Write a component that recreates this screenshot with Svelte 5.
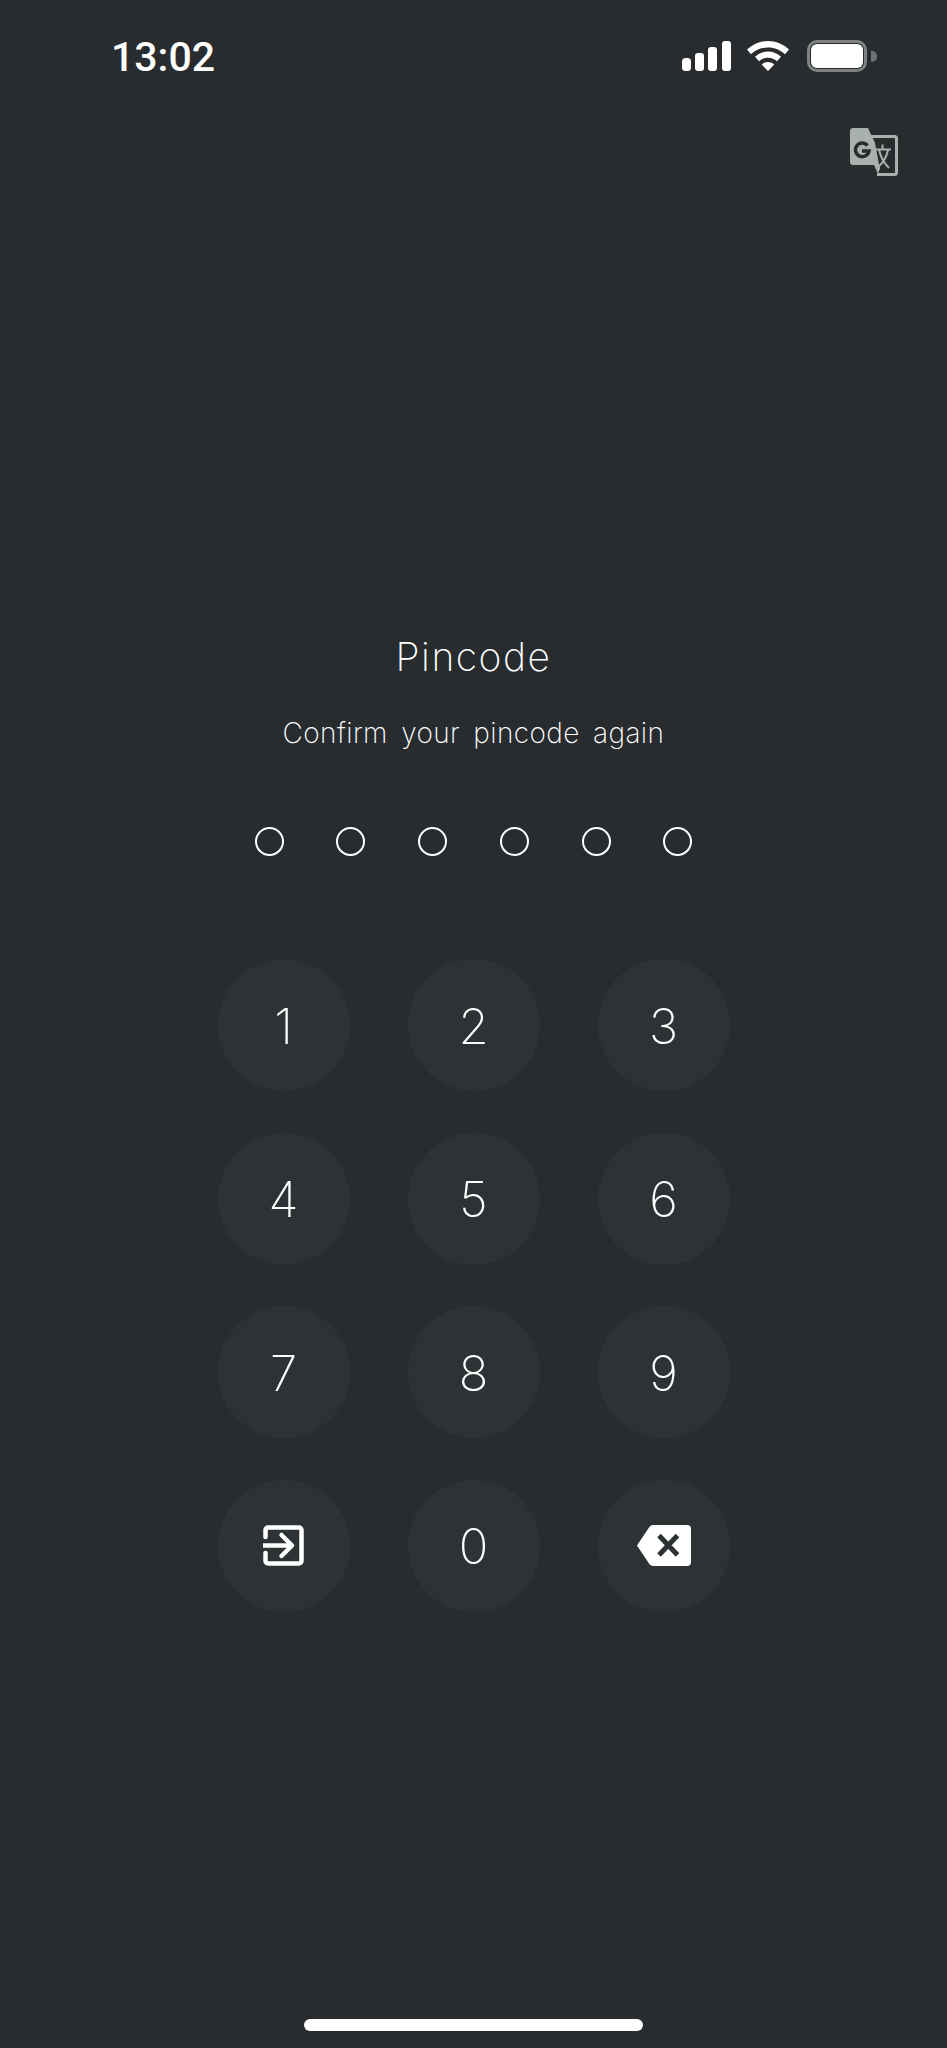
<script>
  const dots = [0, 1, 2, 3, 4, 5];
  const keys = ['1', '2', '3', '4', '5', '6', '7', '8', '9', 'enter', '0', 'del'];
</script>

<main class="screen">
  <header class="status">
    <span class="time">13:02</span>
    <div class="status-icons">
      <svg class="signal" viewBox="0 0 49 30" width="49" height="30" aria-hidden="true">
        <rect x="0" y="17" width="9" height="13" rx="3.5" />
        <rect x="13" y="12" width="9" height="18" rx="3" />
        <rect x="26" y="6" width="9" height="24" rx="3" />
        <rect x="40" y="0" width="9" height="30" rx="3" />
      </svg>
      <svg class="wifi" viewBox="0 0 42 30" width="42" height="30" aria-hidden="true">
        <path d="M21 0C13 0 6 3 0 8.500l4 4.700C8.500 9 14.500 6.500 21 6.500s12.500 2.500 17 6.700l4-4.700C36 3 29 0 21 0z" />
        <path d="M21 10.500c-5 0-9.500 2-13 5.200l4 4.600c2.300-2.200 5.500-3.600 9-3.600s6.700 1.400 9 3.600l4-4.600C30.500 12.500 26 10.500 21 10.500z" />
        <path d="M21 21c-2.500 0-4.800 1-6.300 2.600L21 30l6.300-6.400C25.800 22 23.500 21 21 21z" />
      </svg>
      <div class="battery">
        <div class="battery-body"><div class="battery-fill"></div></div>
        <div class="battery-nub"></div>
      </div>
    </div>
  </header>

  <div class="translate-row">
    <svg class="translate" viewBox="0 0 48 48" width="48" height="48" aria-hidden="true">
      <path class="sheet-back" d="M20 8.500h24.500a2 2 0 0 1 2 2v34a2 2 0 0 1-2 2H27" />
      <path class="sheet-front" d="M3 0h15l7 15 5 27-6-5H3a3 3 0 0 1-3-3V3a3 3 0 0 1 3-3z" />
      <path class="sheet-front" d="M23.500 36h5l1.500 4-2 6z" />
      <path class="g" d="M17.500 17.500a6.800 6.800 0 1 0 1.500 5.500h-7" />
      <path class="zi" d="M32.500 16.500v4.500M26 21.500h15M38 22c-1.500 7-5 13-10 17M29 22c1.500 6 5 13 10 18" />
    </svg>
  </div>

  <section class="prompt">
    <h1>Pincode</h1>
    <p>Confirm your pincode again</p>
  </section>

  <div class="dots">
    {#each dots as d (d)}
      <span class="dot"></span>
    {/each}
  </div>

  <div class="keypad">
    {#each keys as k (k)}
      <button class="key" type="button">
        {#if k === 'enter'}
          <svg viewBox="0 0 41 41" width="41" height="41" aria-hidden="true">
            <path class="stroke" d="M2.500 12V5a2.500 2.500 0 0 1 2.500-2.500h31a2.500 2.500 0 0 1 2.500 2.500v31a2.500 2.500 0 0 1-2.500 2.500H5a2.500 2.500 0 0 1-2.500-2.500v-8" />
            <path class="shaft" d="M0 20.500h27" />
            <path class="stroke" d="M18.500 10l10.500 10.500L18.500 31" />
          </svg>
        {:else if k === 'del'}
          <svg viewBox="0 0 54 41" width="54" height="41" aria-hidden="true">
            <path class="fill" d="M16 0h34a4 4 0 0 1 4 4v33a4 4 0 0 1-4 4H16a5 5 0 0 1-4-2.500L0 20.500 12 2.500A5 5 0 0 1 16 0z" />
            <path class="cross" d="M22 10.500l18.500 19.500M40.500 10.500L22 30" />
          </svg>
        {:else}
          <span class="digit">{k}</span>
        {/if}
      </button>
    {/each}
  </div>

  <div class="home-bar"></div>
</main>

<style>
  :global(body) {
    margin: 0;
    background: #282c2f;
  }

  .screen {
    position: relative;
    display: flex;
    flex-direction: column;
    align-items: center;
    width: 947px;
    height: 2048px;
    overflow: hidden;
    background: #282c2f;
    color: #fff;
    font-family: Inter, sans-serif;
  }

  .status {
    box-sizing: border-box;
    display: flex;
    justify-content: space-between;
    align-items: flex-start;
    width: 100%;
    height: 128px;
    padding: 34px 70px 0 111px;
  }

  .time {
    font: 500 41px/46px Roboto, sans-serif;
  }

  .status-icons {
    display: flex;
    align-items: flex-start;
    gap: 16px;
    padding: 7px 0 0;
  }

  .wifi {
    margin-right: 2px;
  }

  .signal,
  .wifi {
    fill: #fff;
  }

  .battery {
    display: flex;
    align-items: center;
    gap: 4px;
    margin-top: -1px;
  }

  .battery-body {
    box-sizing: border-box;
    width: 60px;
    height: 32px;
    padding: 1px;
    border: 3px solid #7f8283;
    border-radius: 10px;
  }

  .battery-fill {
    width: 100%;
    height: 100%;
    border-radius: 6px;
    background: #fff;
  }

  .battery-nub {
    width: 6px;
    height: 11px;
    border-radius: 0 5px 5px 0;
    background: #6f7274;
  }

  .translate-row {
    display: flex;
    justify-content: flex-end;
    box-sizing: border-box;
    width: 100%;
    height: 48px;
    padding-right: 49px;
  }

  .sheet-back {
    fill: none;
    stroke: #a9b1ad;
    stroke-width: 3;
  }

  .sheet-front {
    fill: #a9b1ad;
  }

  .g {
    fill: none;
    stroke: #282c2f;
    stroke-width: 3.500;
  }

  .zi {
    fill: none;
    stroke: #a9b1ad;
    stroke-width: 2;
  }

  .prompt {
    display: flex;
    flex-direction: column;
    align-items: center;
    margin-top: 454px;
  }

  h1 {
    margin: 0;
    font-size: 39px;
    line-height: 54px;
    font-weight: 200;
    letter-spacing: 1.500px;
  }

  p {
    margin: 30px 0 0;
    font-size: 28px;
    line-height: 38px;
    font-weight: 200;
    letter-spacing: 0.400px;
    word-spacing: 5px;
  }

  .dots {
    display: flex;
    gap: 52.800px;
    margin-top: 75px;
  }

  .dot {
    box-sizing: border-box;
    width: 29px;
    height: 29px;
    border: 2px solid #fff;
    border-radius: 50%;
  }

  .keypad {
    display: grid;
    grid-template-columns: repeat(3, 132px);
    grid-auto-rows: 132px;
    column-gap: 58px;
    row-gap: 41.500px;
    margin-top: 103px;
  }

  .key {
    display: flex;
    align-items: center;
    justify-content: center;
    padding: 0;
    border: 0;
    border-radius: 50%;
    background: #2d3335;
    color: #fff;
    font: 200 49px/1 Inter, sans-serif;
  }

  .digit {
    padding-top: 2px;
  }

  .stroke {
    fill: none;
    stroke: #fff;
    stroke-width: 4.500;
    stroke-linejoin: round;
    stroke-linecap: round;
  }

  .shaft {
    fill: none;
    stroke: #fff;
    stroke-width: 4.500;
  }

  .fill {
    fill: #fff;
  }

  .cross {
    fill: none;
    stroke: #2d3335;
    stroke-width: 5;
  }

  .home-bar {
    position: absolute;
    left: 304px;
    bottom: 17px;
    width: 339px;
    height: 12px;
    border-radius: 6px;
    background: #fff;
  }
</style>
